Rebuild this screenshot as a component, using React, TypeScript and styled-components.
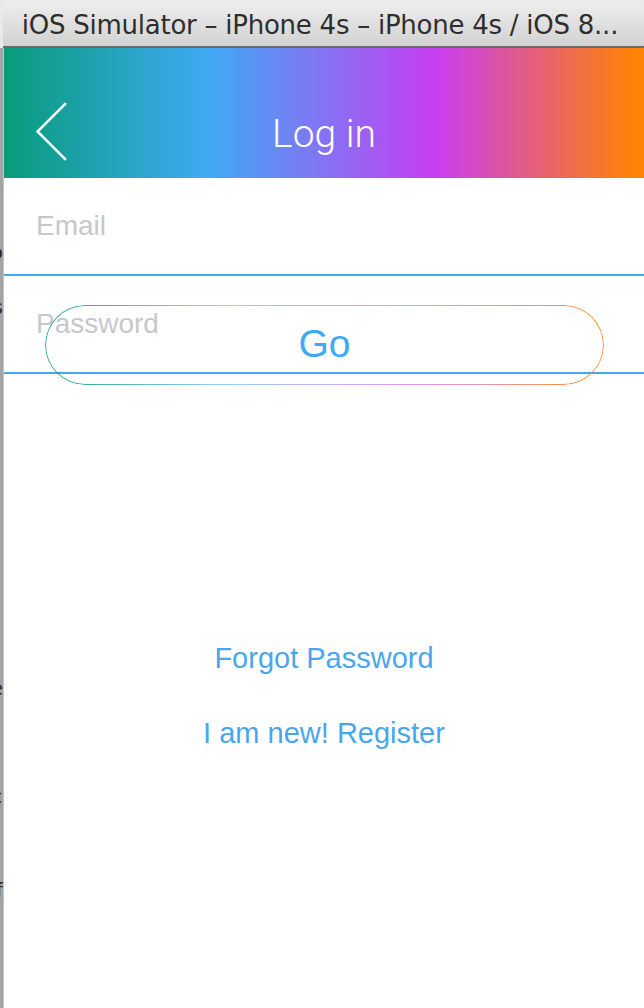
import React from "react";
import styled, { createGlobalStyle } from "styled-components";

const GlobalStyle = createGlobalStyle`
  html, body {
    margin: 0;
    padding: 0;
    background: #ffffff;
  }
  body {
    font-family: "Liberation Sans", Arial, sans-serif;
  }
  * { box-sizing: border-box; }
`;

const Window = styled.div`
  width: 644px;
  height: 1008px;
  display: flex;
  flex-direction: column;
  background: #e9e9e9;
  overflow: hidden;
`;

const TitleBar = styled.div`
  height: 47px;
  margin-left: 3px;
  margin-top: 1px;
  border-top-left-radius: 7px;
  border-top-right-radius: 7px;
  background: linear-gradient(#eeeeee, #d2d2d2);
  border-bottom: 2px solid #6b6b6b;
  display: flex;
  align-items: center;
  justify-content: center;
  font-family: "DejaVu Sans", "Liberation Sans", sans-serif;
  font-size: 26px;
  color: #2e2e2e;
  letter-spacing: -0.25px;
  white-space: nowrap;
  padding: 3px 7px 0 0;
`;

const Body = styled.div`
  flex: 1;
  display: flex;
`;

const SideStrip = styled.div`
  width: 4px;
  background: #a4a4a4;
  position: relative;
  overflow: hidden;
  border-right: 1px solid #c4c4c4;
`;

const Fragment = styled.span<{ $top: number }>`
  position: absolute;
  top: ${(p) => p.$top}px;
  right: 0;
  font-family: "DejaVu Sans", sans-serif;
  font-size: 20px;
  line-height: 20px;
  color: #2a2a2a;
`;

const Screen = styled.div`
  flex: 1;
  display: flex;
  flex-direction: column;
  background: #ffffff;
`;

const Header = styled.header`
  height: 130px;
  padding-top: 42px;
  background: linear-gradient(
    90deg,
    #079c7a 0%,
    #3fa9f5 32%,
    #c83ef1 67.5%,
    #ff8106 98%,
    #ff8106 100%
  );
  display: grid;
  grid-template-columns: 1fr auto 1fr;
  align-items: center;
`;

const BackButton = styled.button`
  justify-self: start;
  border: 0;
  background: none;
  padding: 0 0 4px 32px;
  height: 88px;
  display: flex;
  align-items: center;
  cursor: pointer;
`;

const Title = styled.h1`
  margin: 0;
  font-family: "Roboto", "Liberation Sans", sans-serif;
  font-weight: 300;
  font-size: 39px;
  color: #ffffff;
  line-height: 86px;
`;

const Field = styled.div`
  height: 98px;
  border-bottom: 2px solid #3fa9f5;
  display: flex;
  align-items: center;
  padding: 0 0 0 30px;
`;

const Input = styled.input`
  border: 0;
  outline: none;
  width: 100%;
  background: transparent;
  font-family: "Liberation Sans", Arial, sans-serif;
  font-size: 28px;
  color: #333;
  &::placeholder {
    color: #c7c7cd;
  }
`;

const GoButton = styled.button`
  position: relative;
  align-self: center;
  margin-top: -69px;
  margin-left: 1px;
  width: 559px;
  height: 80px;
  border-radius: 40px;
  border: 0;
  background: transparent;
  font-family: "Liberation Sans", Arial, sans-serif;
  font-size: 39px;
  color: #3fa9f5;
  padding: 0 0 2px 0;
  cursor: pointer;

  &::before {
    content: "";
    position: absolute;
    inset: 0;
    border-radius: inherit;
    padding: 1px;
    background: linear-gradient(
      90deg,
      rgba(7, 156, 122, 0.9) 0%,
      rgba(63, 169, 245, 0.55) 32%,
      rgba(200, 62, 241, 0.55) 66%,
      rgba(255, 129, 6, 0.9) 100%
    );
    -webkit-mask: linear-gradient(#000 0 0) content-box, linear-gradient(#000 0 0);
    -webkit-mask-composite: xor;
    mask-composite: exclude;
    pointer-events: none;
  }
`;

const Links = styled.div`
  margin-top: 256px;
  display: flex;
  flex-direction: column;
  align-items: center;
  gap: 41px;
`;

const LinkButton = styled.a`
  font-family: "Liberation Sans", Arial, sans-serif;
  font-size: 29px;
  line-height: 34px;
  color: #4aa6ec;
  text-decoration: none;
  cursor: pointer;
`;

function Chevron() {
  return (
    <svg width="31" height="60" viewBox="0 0 31 60" aria-hidden="true">
      <polyline
        points="29,2 1.5,29.5 29,57"
        fill="none"
        stroke="#ffffff"
        strokeWidth="2.6"
        strokeLinecap="square"
      />
    </svg>
  );
}

export default function App() {
  return (
    <>
      <GlobalStyle />
      <Window>
        <TitleBar>iOS Simulator – iPhone 4s – iPhone 4s / iOS 8...</TitleBar>
        <Body>
          <SideStrip>
            <Fragment $top={194}>o</Fragment>
            <Fragment $top={249}>s</Fragment>
            <Fragment $top={630}>e</Fragment>
            <Fragment $top={739}>&lt;</Fragment>
            <Fragment $top={832}>f</Fragment>
          </SideStrip>
          <Screen>
            <Header>
              <BackButton aria-label="Back">
                <Chevron />
              </BackButton>
              <Title>Log in</Title>
              <span />
            </Header>
            <Field>
              <Input type="email" placeholder="Email" />
            </Field>
            <Field>
              <Input type="password" placeholder="Password" />
            </Field>
            <GoButton>Go</GoButton>
            <Links>
              <LinkButton>Forgot Password</LinkButton>
              <LinkButton>I am new! Register</LinkButton>
            </Links>
          </Screen>
        </Body>
      </Window>
    </>
  );
}
